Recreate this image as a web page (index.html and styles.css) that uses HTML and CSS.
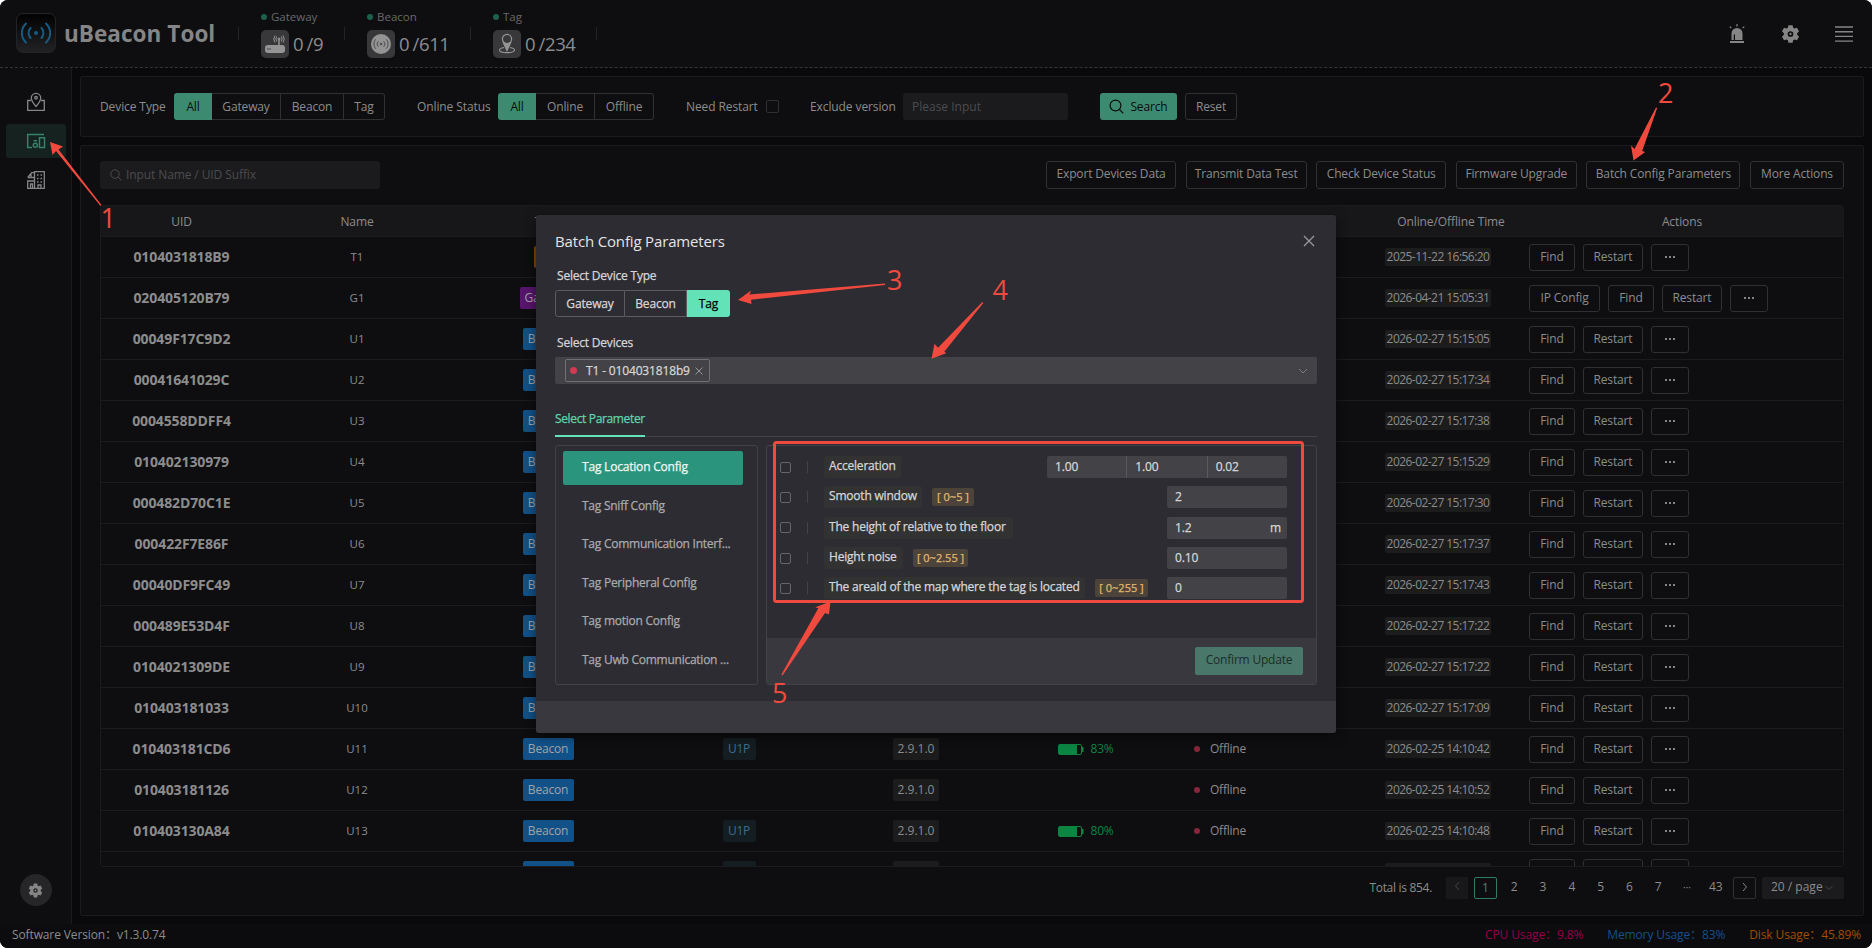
FILE: index.html
```html
<!DOCTYPE html>
<html lang="en">
<head>
<meta charset="utf-8">
<title>uBeacon Tool</title>
<link rel="stylesheet" href="styles.css">
</head>

<body>
<div class="app">

<header class="header">
  <div class="logo">
    <svg width="30" height="26" viewBox="0 0 30 26" fill="none" stroke="#155d86" stroke-width="1.9" stroke-linecap="round">
      <circle cx="15" cy="13" r="2" fill="#155d86" stroke="none"/>
      <path d="M9.500 8a7.500 7.500 0 0 0 0 10M20.500 8a7.500 7.500 0 0 1 0 10M5 3.500a13 13 0 0 0 0 19M25 3.500a13 13 0 0 1 0 19"/>
    </svg>
  </div>
  <h1 class="brand">uBeacon Tool</h1>

  <div class="stat stat-gateway">
    <div class="stat-label"><i class="dot"></i>Gateway</div>
    <div class="stat-value">
      <span class="stat-icon">
        <svg width="22" height="22" viewBox="0 0 22 22" fill="none" stroke="#949494" stroke-width="1">
          <rect x="1" y="12" width="20" height="8" rx="3" fill="#949494" stroke="none"/>
          <path d="M15 12V6" stroke-width="1.500"/>
          <circle cx="15" cy="6" r="1" fill="#949494"/>
          <path d="M12.800 3.500a4 4 0 0 0 0 5M17.200 3.500a4 4 0 0 1 0 5M11 2.500a6 6 0 0 0 0 7M19 2.500a6 6 0 0 1 0 7"/>
          <path d="M3.500 16h1M5.500 16h1" stroke="#38383a" stroke-width="1.500"/>
        </svg>
      </span>
      0 /9
    </div>
  </div>
  <div class="stat stat-beacon">
    <div class="stat-label"><i class="dot"></i>Beacon</div>
    <div class="stat-value">
      <span class="stat-icon">
        <svg width="22" height="22" viewBox="0 0 22 22" fill="none" stroke="#4c4c4c" stroke-width="1">
          <circle cx="11" cy="11" r="10" fill="#949494" stroke="none"/>
          <circle cx="11" cy="11" r="1.300" fill="#4c4c4c" stroke="none"/>
          <path d="M8.300 8.200a4 4 0 0 0 0 5.600M13.700 8.200a4 4 0 0 1 0 5.600M5.700 6.300a7 7 0 0 0 0 9.400M16.300 6.300a7 7 0 0 1 0 9.400"/>
        </svg>
      </span>
      0 /611
    </div>
  </div>
  <div class="stat stat-tag">
    <div class="stat-label"><i class="dot"></i>Tag</div>
    <div class="stat-value">
      <span class="stat-icon">
        <svg width="22" height="22" viewBox="0 0 22 22" fill="none" stroke="#949494" stroke-width="1.200">
          <circle cx="11" cy="6" r="4.600"/>
          <path d="M7 9l4 8.500L15 9c-1.500 2-6.500 2-8 0z" fill="#949494"/>
          <path d="M8 14.500c-2.800.5-4.500 1.300-4.500 2.500 0 1.600 3.300 2.700 7.500 2.700s7.500-1.100 7.500-2.700c0-1.200-1.700-2-4.500-2.500"/>
        </svg>
      </span>
      0 /234
    </div>
  </div>

  <div class="header-tools">
    <svg width="18" height="20" viewBox="0 0 18 20" fill="#858585">
      <path d="M3.500 16V9.500a5.500 5.500 0 0 1 11 0V16H7V10.500H5.800V16z"/>
      <rect x="2" y="17" width="14" height="2"/>
      <path d="M8.400 0h1.200v2.500H8.400zM1.300 3l.9-.8 1.600 1.600-.9.800zM16.700 3l-.9-.8-1.600 1.600.9.800z"/>
    </svg>
    <svg class="gear" width="19" height="20" viewBox="0 0 20 20"><use href="#gear"/></svg>
    <svg width="18" height="18" viewBox="0 0 18 18" stroke="#858585" stroke-width="1.400">
      <path d="M0 2h18M0 6.700h18M0 11.400h18M0 16.100h18"/>
    </svg>
  </div>
</header>

<div class="main">
  <nav class="sidebar">
    <a class="nav-item">
      <svg width="20" height="20" viewBox="0 0 20 20" fill="none" stroke="#858585" stroke-width="1.300">
        <path d="M5 8.500H1.700v9.800h16.600V8.500H15"/>
        <path d="M10 14.500C7 11 5.300 8.600 5.300 6a4.700 4.700 0 0 1 9.400 0c0 2.600-1.700 5-4.700 8.500z"/>
        <circle cx="10" cy="5.800" r="1.300"/>
      </svg>
    </a>
    <a class="nav-item active">
      <svg width="20" height="16" viewBox="0 0 20 16" fill="none" stroke="#34836a" stroke-width="1.500">
        <path d="M18 1.500H1.700v13H6"/>
        <rect x="13.500" y="4.700" width="5" height="9.800"/>
        <path d="M7.500 7.700h3.500"/>
        <circle cx="9.300" cy="12.300" r="2"/>
      </svg>
    </a>
    <a class="nav-item">
      <svg width="20" height="20" viewBox="0 0 20 20" fill="none" stroke="#858585" stroke-width="1.300">
        <path d="M8.500 18.300V1.700h9.800v16.600H1.700V11h6.800M4.500 18.300V14H6.500v4.300M1.700 7.500l4-4.800h2.800M1.700 7.500h6.800M5 7.500V4"/>
        <path d="M11 5h1.500M14.500 5H16M11 8.500h1.500M14.500 8.500H16M11 12h1.500M14.500 12H16M12 18v-3h3v3"/>
      </svg>
    </a>
    <span class="settings-fab">
      <svg class="gear" width="15" height="15" viewBox="0 0 20 20"><use href="#gear"/></svg>
    </span>
  </nav>

  <div class="content">
    <section class="card filters">
      <span class="label device-type">Device Type</span>
      <div class="radio-group">
        <span class="radio checked">All</span><span class="radio w-gateway">Gateway</span><span class="radio w-beacon">Beacon</span><span class="radio w-tag">Tag</span>
      </div>
      <span class="label online-status">Online Status</span>
      <div class="radio-group">
        <span class="radio checked">All</span><span class="radio w-online">Online</span><span class="radio w-offline">Offline</span>
      </div>
      <span class="label need-restart">Need Restart</span>
      <span class="checkbox"></span>
      <span class="label exclude">Exclude version</span>
      <span class="input exclude-input">Please Input</span>
      <span class="btn btn-search">
        <svg width="15" height="15" viewBox="0 0 15 15" fill="none" stroke="#0a0a0a" stroke-width="1.200"><circle cx="6.500" cy="6.500" r="5.400"/><path d="M10.300 10.300l4 4"/></svg>
        Search
      </span>
      <span class="btn btn-reset">Reset</span>
    </section>

    <section class="card list">
      <div class="toolbar">
        <span class="input search-input">
          <svg width="12" height="12" viewBox="0 0 12 12" fill="none" stroke="#4c4c4e"><circle cx="5" cy="5" r="4.200"/><path d="M8.200 8.200l3.300 3.300"/></svg>
          Input Name / UID Suffix
        </span>
        <div class="toolbar-actions">
          <span class="btn w-export">Export Devices Data</span>
          <span class="btn w-transmit">Transmit Data Test</span>
          <span class="btn w-check">Check Device Status</span>
          <span class="btn w-firmware">Firmware Upgrade</span>
          <span class="btn w-batch">Batch Config Parameters</span>
          <span class="btn w-more">More Actions</span>
        </div>
      </div>

      <div class="table">
        <div class="row thead">
          <span>UID</span><span>Name</span><span>Type</span><span></span><span></span><span></span><span></span><span></span><span class="time-head">Online/Offline Time</span><span>Actions</span>
        </div>
        <div id="rows"></div>
      </div>

      <div class="pagination">
        <span class="total">Total is 854.</span>
        <span class="page prev"><svg width="6" height="10" viewBox="0 0 6 10"><path d="M5 1L1.500 5 5 9"/></svg></span>
        <span class="page current">1</span>
        <span class="page">2</span>
        <span class="page">3</span>
        <span class="page">4</span>
        <span class="page">5</span>
        <span class="page">6</span>
        <span class="page">7</span>
        <span class="page more">···</span>
        <span class="page">43</span>
        <span class="page next"><svg width="6" height="10" viewBox="0 0 6 10"><path d="M1 1l3.500 4L1 9"/></svg></span>
        <span class="page-size">20 / page<svg width="8" height="6" viewBox="0 0 8 6"><path d="M.5 1L4 4.500 7.500 1"/></svg></span>
      </div>
    </section>
  </div>
</div>

<footer class="footer">
  <span class="version">Software Version：v1.3.0.74</span>
  <span class="cpu">CPU Usage：9.8%</span>
  <span class="memory">Memory Usage：83%</span>
  <span class="disk">Disk Usage：45.89%</span>
</footer>

<div class="modal">
  <div class="modal-head">
    <h2>Batch Config Parameters</h2>
    <svg width="12" height="12" viewBox="0 0 12 12" stroke="#99989c" stroke-width="1.300"><path d="M1 1l10 10M11 1L1 11"/></svg>
  </div>
  <div class="modal-body">
    <div class="form-label">Select Device Type</div>
    <div class="radio-group">
      <span class="radio w-m-gateway">Gateway</span><span class="radio w-m-beacon">Beacon</span><span class="radio checked">Tag</span>
    </div>
    <div class="form-label">Select Devices</div>
    <div class="select">
      <span class="chip"><i class="dot"></i>T1 - 0104031818b9<svg width="8" height="8" viewBox="0 0 8 8" stroke="#98989b"><path d="M.5.500l7 7M7.500.5l-7 7"/></svg></span>
      <svg width="10" height="6" viewBox="0 0 10 6" fill="none" stroke="#7d7d80"><path d="M1 1l4 4 4-4"/></svg>
    </div>
    <div class="tabs"><span class="tab">Select Parameter</span></div>

    <div class="panes">
      <ul class="menu">
        <li class="active">Tag Location Config</li>
        <li>Tag Sniff Config</li>
        <li>Tag Communication Interf...</li>
        <li>Tag Peripheral Config</li>
        <li>Tag motion Config</li>
        <li>Tag Uwb Communication ...</li>
      </ul>
      <div class="params">
        <div class="param"><i class="checkbox"></i><i class="bar"></i><span class="p-name p1">Acceleration</span>
          <span class="p-group"><span>1.00</span><span>1.00</span><span>0.02</span></span></div>
        <div class="param"><i class="checkbox"></i><i class="bar"></i><span class="p-name p2">Smooth window</span><span class="range r1">[ 0~5 ]</span>
          <span class="p-input">2</span></div>
        <div class="param"><i class="checkbox"></i><i class="bar"></i><span class="p-name p3">The height of relative to the floor</span>
          <span class="p-input">1.2<em>m</em></span></div>
        <div class="param"><i class="checkbox"></i><i class="bar"></i><span class="p-name p4">Height noise</span><span class="range r2">[ 0~2.55 ]</span>
          <span class="p-input">0.10</span></div>
        <div class="param"><i class="checkbox"></i><i class="bar"></i><span class="p-name p5">The areaId of the map where the tag is located</span><span class="range r3">[ 0~255 ]</span>
          <span class="p-input">0</span></div>
        <div class="params-foot"><span class="btn-confirm">Confirm Update</span></div>
      </div>
    </div>
  </div>
  <div class="modal-foot"></div>
</div>

<!-- step markers drawn over the page -->
<svg class="steps" width="1872" height="948" viewBox="0 0 1872 948">
  <rect x="774.500" y="442.500" width="528" height="159" rx="2"/>
  <path d="M50 142l13 4.500-4.500 3L101.500 205l-1 1L56 151l-3.500 4z"/>
  <path d="M1633.500 160.500l-2.500-15 3.500 3.500 21.500-41.500 1.200.5-15 43 3 1z"/>
  <path d="M738 300l13-9.500-1.500 4L885 283.500v1.500l-134 14.800.5 4.200z"/>
  <path d="M931.500 358.700l3-15 3.500 4L982.300 302l1 1-39 48.700 2 1.600z"/>
  <path d="M830.500 601.500l-1.500 13-4-1.500-42.500 62.500-1.200-.8 37-66.500-3-1z"/>
  <text x="100.500" y="228">1</text>
  <text x="1658" y="103">2</text>
  <text x="887" y="289.500">3</text>
  <text x="992.500" y="300">4</text>
  <text x="772" y="703">5</text>
</svg>

</div>

<svg width="0" height="0" class="defs">
  <symbol id="gear" viewBox="0 0 20 20">
    <path fill-rule="evenodd" d="M7.800.8h4.400l.6 2.600 1.400.8 2.600-.8 2.200 3.800-2 1.900v1.800l2 1.900-2.200 3.800-2.600-.8-1.400.8-.6 2.600H7.800l-.6-2.600-1.400-.8-2.600.8L1 12.800l2-1.900V9.100L1 7.200l2.200-3.800 2.600.8 1.400-.8zM10 7a3 3 0 1 0 0 6 3 3 0 0 0 0-6zm0 1.800a1.200 1.200 0 1 1 0 2.400 1.200 1.200 0 0 1 0-2.400z"/>
  </symbol>
</svg>

<script src="app.js"></script>
</body>
</html>
```

FILE: styles.css
```css
* {
  box-sizing: border-box;
}

body {
  background: #fff;
  color: #8c8c8d;
  font: 12px/20px 'Open Sans', 'Noto Sans', 'Noto Sans CJK SC', sans-serif;
  margin: 0;
  overflow: hidden;
}

h1,
h2,
ul {
  margin: 0;
  padding: 0;
}
ul {
  list-style-type: none;
}
svg {
  flex: none;
}
i,
em {
  font-style: normal;
}

.app {
  background: #09090b;
  border-radius: 8px;
  display: flex;
  flex-direction: column;
  height: 948px;
  overflow: hidden;
  position: relative;
  width: 1872px;
}
.defs {
  position: absolute;
}
.gear {
  fill: #858585;
}
.dot {
  border-radius: 50%;
  display: inline-block;
  height: 6px;
  width: 6px;
}


/* Header */
.header {
  align-items: flex-start;
  background: #0e0e10;
  border-bottom: 1px dashed #343436;
  display: flex;
  height: 68px;
  padding-left: 16px;
}
.logo {
  align-items: center;
  background: linear-gradient(#020203, #222224);
  border: 1px solid #242426;
  border-radius: 7px;
  display: flex;
  height: 40px;
  justify-content: center;
  margin-top: 13px;
  width: 40px;
}
.brand {
  color: #858586;
  font-size: 22.500px;
  font-weight: 700;
  letter-spacing: .05px;
  line-height: 40px;
  margin: 14px 0 0 8px;
  white-space: nowrap;
  width: 174px;
}
.stat {
  background: linear-gradient(#232325, #232325) 0 27px / 1px 13px no-repeat;
  height: 66px;
  padding: 8px 0 0 23px;
  white-space: nowrap;
  width: 106px;
}
.stat-beacon {
  width: 126px;
}
.stat-tag {
  background:
    linear-gradient(#232325, #232325) 0 27px / 1px 13px no-repeat,
    linear-gradient(#232325, #232325) 100% 27px / 1px 13px no-repeat;
  width: 127px;
}
.stat-label {
  color: #69696b;
  font-size: 11.500px;
  line-height: 18px;
}
.stat-label .dot {
  background: #1b614c;
  height: 6px;
  margin-right: 4px;
  position: relative;
  top: -1px;
}
.stat-value {
  align-items: center;
  display: flex;
  font-size: 18.500px;
  letter-spacing: -.4px;
  gap: 4px;
  height: 28px;
  line-height: 24px;
  margin-top: 4px;
  word-spacing: -1px;
}
.stat-icon {
  align-items: center;
  background: #38383a;
  border-radius: 5px;
  display: flex;
  height: 28px;
  justify-content: center;
  width: 28px;
}
.header-tools {
  align-items: center;
  display: flex;
  gap: 35px;
  height: 67px;
  margin-left: auto;
  padding-right: 19px;
}


/* Sidebar */
.main {
  display: flex;
  height: 856px;
}
.sidebar {
  align-items: center;
  background: #0e0e10;
  border-right: 1px solid #1b1b1d;
  display: flex;
  flex-direction: column;
  gap: 5px;
  padding-top: 17px;
  width: 72px;
}
.nav-item {
  align-items: center;
  border-radius: 3px;
  display: flex;
  height: 34px;
  justify-content: center;
  width: 60px;
}
.nav-item.active {
  background: #15221f;
}
.settings-fab {
  align-items: center;
  background: #262628;
  border-radius: 50%;
  display: flex;
  height: 32px;
  justify-content: center;
  margin: auto 0 18px;
  width: 32px;
}


/* Cards */
.content {
  display: flex;
  flex-direction: column;
  gap: 8px;
  padding: 8px;
}
.card {
  background: #0e0e10;
  border: 1px solid #1b1b1d;
  border-radius: 2px;
  width: 1784px;
}
.filters {
  align-items: center;
  display: flex;
  height: 61px;
  padding-left: 19px;
}
.list {
  display: flex;
  flex-direction: column;
  height: 771px;
  padding: 15px 19px 0;
}
.label {
  flex: none;
  letter-spacing: -.1px;
  white-space: nowrap;
}
.device-type {
  width: 74px;
}
.online-status {
  margin-left: 32px;
  width: 81px;
}
.need-restart {
  margin-left: 32px;
  width: 80px;
}
.exclude {
  margin-left: 31px;
  width: 93px;
}

.radio-group {
  border-radius: 3px;
  display: flex;
  height: 27px;
}
.radio {
  border: 1px solid #303032;
  border-left-width: 0;
  letter-spacing: -.15px;
  line-height: 26px;
  text-align: center;
  width: 38px;
}
.radio:last-child {
  border-radius: 0 3px 3px 0;
}
.filters .checked {
  background: #3c8b70;
  border: 0;
  border-radius: 3px 0 0 3px;
  color: #08100d;
  line-height: 28px;
}
.w-gateway {
  width: 69px;
}
.w-beacon {
  width: 63px;
}
.w-tag {
  width: 41px;
}
.w-online {
  width: 59px;
}
.w-offline {
  width: 59px;
}

.checkbox {
  border: 1px solid #303032;
  border-radius: 2px;
  flex: none;
  height: 13px;
  width: 13px;
}
.input {
  align-items: center;
  background: #1b1b1d;
  border-radius: 3px;
  color: #4c4c4e;
  display: flex;
}
.exclude-input {
  height: 27px;
  padding-left: 9px;
  width: 165px;
}
.btn {
  align-items: center;
  border: 1px solid #303032;
  border-radius: 3px;
  display: flex;
  flex: none;
  height: 28px;
  justify-content: center;
  letter-spacing: -.15px;
  line-height: 24px;
  padding-bottom: 2px;
  white-space: nowrap;
}
.btn-search {
  background: #3c8b70;
  border: 0;
  color: #0a0a0a;
  gap: 6px;
  height: 27px;
  margin-left: 32px;
  padding-bottom: 0;
  width: 77px;
}
.btn-reset {
  height: 27px;
  margin-left: 8px;
  padding-bottom: 0;
  width: 52px;
}

.toolbar {
  display: flex;
  height: 44px;
  justify-content: space-between;
}
.search-input {
  gap: 4px;
  height: 28px;
  letter-spacing: -.1px;
  padding-left: 10px;
  width: 280px;
}
.toolbar-actions {
  display: flex;
  gap: 9.600px;
}
.w-export {
  width: 130px;
}
.w-transmit {
  width: 121px;
}
.w-check {
  width: 130px;
}
.w-firmware {
  width: 121px;
}
.w-batch {
  width: 154px;
}
.w-more {
  width: 94px;
}


/* Device table */
.table {
  border: 1px solid #1b1b1d;
  border-radius: 3px;
  height: 662px;
  overflow: hidden;
}
.row {
  align-items: center;
  border-bottom: 1px solid #1b1b1d;
  display: grid;
  grid-template-columns: 161px 190px 192px 190px 164px 176px 94px 87px 166px 322px;
  height: 41px;
  justify-items: center;
}
.thead {
  background: #171719;
  height: 31px;
  letter-spacing: -.1px;
  line-height: 19px;
}
.time-head {
  margin-left: 26px;
}
.row .uid {
  font-size: 14px;
  font-weight: 700;
  letter-spacing: -.12px;
}
.row .name {
  font-size: 11.500px;
  margin-top: -1px;
}
.tag {
  align-items: center;
  border-radius: 2px;
  color: #a0a4a8;
  display: flex;
  height: 22px;
  justify-content: center;
  letter-spacing: -.2px;
  line-height: 20px;
  padding-bottom: 1px;
  width: 51px;
}
.tag.beacon {
  background: #115188;
}
.tag.gateway {
  background: #57156b;
  width: 57px;
}
.tag.tag-type {
  background: #894500;
  width: 28px;
}
.tag.model {
  background: #141d22;
  color: #3b6e91;
  width: 33px;
}
.tag.ver {
  background: #1c1c1d;
  color: #8c8c8d;
  letter-spacing: 0;
  width: 46px;
}
.battery {
  align-items: center;
  color: #0c8543;
  display: flex;
  gap: 6px;
  letter-spacing: -.2px;
}
.status {
  align-items: center;
  display: flex;
  gap: 10px;
  letter-spacing: -.2px;
  margin-left: -2px;
}
.status .dot {
  background: #872639;
}
.time {
  background: #1c1c1d;
  border-radius: 2px;
  height: 18px;
  letter-spacing: -.55px;
  line-height: 17px;
  text-align: center;
  width: 106px;
}
.actions {
  display: flex;
  gap: 8px;
  justify-self: start;
  padding-left: 8px;
}
.actions .btn {
  height: 27px;
  padding: 0 0 1px;
}
.w-find {
  width: 46px;
}
.w-restart {
  width: 60px;
}
.w-dots {
  width: 38px;
}
.w-ip {
  width: 71px;
}


/* Pagination */
.pagination {
  align-items: center;
  display: flex;
  height: 22px;
  justify-content: flex-end;
  margin-top: 10px;
}
.page {
  height: 22px;
  line-height: 20px;
  margin-right: 6px;
  text-align: center;
  width: 22.800px;
}
.total {
  letter-spacing: -.3px;
  margin-right: 14px;
}
.pagination svg {
  fill: none;
  stroke: #858586;
}
.pagination .prev {
  background: #18181a;
  width: 22px;
}
.pagination .prev svg,
.page-size svg {
  stroke: #444446;
}
.current {
  border: 1px solid #2f7c64;
  border-radius: 2px;
  color: #3c8b70;
}
.more {
  font-size: 10px;
}
.next {
  border: 1px solid #303032;
  border-radius: 2px;
}
.page-size {
  background: #1b1b1d;
  border-radius: 2px;
  height: 22px;
  line-height: 20px;
  padding-left: 9px;
  width: 82px;
}
.page-size svg {
  margin-left: 2px;
}


/* Footer */
.footer {
  background: #0c0c0e;
  display: flex;
  height: 24px;
  letter-spacing: -.12px;
  padding: 1px 11px 0 12px;
}
.footer span {
  white-space: nowrap;
}
.version {
  margin-right: auto;
}
.cpu {
  color: #96004b;
}
.memory {
  color: #14508f;
  margin: 0 24px;
}
.disk {
  color: #a04e00;
}


/* Batch config dialog */
.modal {
  -webkit-text-stroke: .25px;
  background: #2d2c32;
  border-radius: 3px;
  box-shadow: 0 3px 12px rgba(0, 0, 0, .5);
  color: #d6d6d8;
  display: flex;
  flex-direction: column;
  height: 518px;
  left: 536px;
  letter-spacing: -.15px;
  position: absolute;
  top: 215px;
  width: 800px;
}
.modal-head {
  align-items: center;
  display: flex;
  height: 51px;
  justify-content: space-between;
  padding: 0 21px 0 19px;
}
.modal-head h2 {
  -webkit-text-stroke: 0;
  color: #e4e4e5;
  font-size: 15px;
  font-weight: 400;
  letter-spacing: -.16px;
}
.modal-body {
  flex: 1;
  padding: 0 19px;
}
.form-label {
  height: 24px;
  letter-spacing: -.2px;
  line-height: 20px;
  padding-left: 2px;
}
.modal .radio-group {
  height: 27px;
  margin-bottom: 16px;
}
.modal .radio {
  border-color: #5b5b60;
}
.modal .radio:first-child {
  border-left-width: 1px;
  border-radius: 3px 0 0 3px;
}
.w-m-gateway {
  width: 70px;
}
.w-m-beacon {
  width: 62px;
}
.modal .checked {
  background: #63e2b7;
  border: 0;
  color: #000;
  line-height: 28px;
  width: 43px;
}
.select {
  align-items: center;
  background: #434246;
  border-radius: 2px;
  display: flex;
  height: 27px;
  justify-content: space-between;
  padding: 0 9px 0 10px;
}
.chip {
  align-items: center;
  border: 1px solid #707074;
  border-radius: 2px;
  display: flex;
  height: 23px;
  letter-spacing: -.15px;
  padding-left: 4px;
  white-space: nowrap;
  width: 145px;
}
.chip .dot {
  background: #d03a52;
  height: 7px;
  margin-right: 9px;
  width: 7px;
}
.chip svg {
  margin-left: 5px;
}
.tabs {
  background: linear-gradient(#434248, #434248) 0 29px / 100% 1px no-repeat;
  height: 31px;
  margin-top: 23px;
}
.tab {
  border-bottom: 2px solid #63e2b7;
  color: #5fd5ad;
  display: inline-block;
  height: 30px;
  letter-spacing: -.35px;
  line-height: 24px;
  white-space: nowrap;
  width: 90px;
}
.panes {
  display: flex;
  gap: 8px;
  margin-top: 7px;
}
.menu,
.params {
  border: 1px solid #434248;
  border-radius: 3px;
  height: 240px;
}
.menu {
  padding: 5px 0 0 7px;
  width: 203px;
}
.menu li {
  border-radius: 2px;
  color: #aaaaad;
  height: 34px;
  letter-spacing: -.25px;
  line-height: 32px;
  margin-bottom: 4.500px;
  padding-left: 19px;
  white-space: nowrap;
  width: 180px;
}
.menu .active {
  background: #2a947d;
  color: #f0f6f4;
  letter-spacing: -.2px;
}
.params {
  display: flex;
  flex-direction: column;
  padding-top: 10px;
  width: 551px;
}
.param {
  align-items: center;
  display: flex;
  height: 22.400px;
  margin-bottom: 7.900px;
  padding: 0 29px 0 13px;
}
.param .checkbox {
  border-color: #66656a;
  height: 11px;
  width: 11px;
}
.bar {
  background: #434248;
  height: 12px;
  margin: 0 16px;
  width: 1px;
}
.p-name {
  background: #323232;
  border-radius: 2px;
  flex: none;
  height: 22px;
  letter-spacing: -.2px;
  line-height: 20.500px;
  padding-left: 5px;
  white-space: nowrap;
}
.p1 {
  width: 77px;
}
.p2 {
  width: 98px;
}
.p3 {
  width: 189px;
}
.p4 {
  width: 79px;
}
.p5 {
  width: 261px;
}
.range {
  background: #4c433b;
  border-radius: 2px;
  color: #e3b76c;
  flex: none;
  font-size: 11px;
  height: 18px;
  letter-spacing: 0;
  line-height: 17px;
  margin-left: 10px;
  text-align: center;
}
.r1 {
  width: 42px;
}
.r2 {
  width: 55px;
}
.r3 {
  width: 53px;
}
.p-input,
.p-group {
  background: #434246;
  border-radius: 2px;
  display: flex;
  height: 22px;
  justify-content: space-between;
  line-height: 22px;
  margin-left: auto;
  padding: 0 6px 0 8px;
  width: 120px;
}
.p-group {
  padding: 0;
  width: 240px;
}
.p-group span {
  flex: 1;
  padding-left: 8px;
}
.p-group span + span {
  border-left: 1px solid #5a5a5e;
}
.params-foot {
  background: #39383e;
  display: flex;
  height: 46px;
  justify-content: flex-end;
  margin-top: auto;
  padding: 9px 13px;
}
.btn-confirm {
  -webkit-text-stroke: 0;
  background: #49786a;
  border-radius: 2px;
  color: #1b2d28;
  height: 28px;
  letter-spacing: -.2px;
  line-height: 26px;
  text-align: center;
  width: 108px;
}
.modal-foot {
  background: #39383e;
  border-radius: 0 0 3px 3px;
  height: 32px;
}


/* Step markers */
.steps {
  fill: #f04a3e;
  font-size: 27px;
  left: 0;
  position: absolute;
  top: 0;
}
.steps rect {
  fill: none;
  stroke: #f04a3e;
  stroke-width: 3;
}
```

FILE: app.js
```js
var devices = [
  ['0104031818B9', 'T1', 'Tag', '', '', '', '2025-11-22 16:56:20'],
  ['020405120B79', 'G1', 'Gateway', '', '', '', '2026-04-21 15:05:31'],
  ['00049F17C9D2', 'U1', 'Beacon', '', '', '', '2026-02-27 15:15:05'],
  ['00041641029C', 'U2', 'Beacon', '', '', '', '2026-02-27 15:17:34'],
  ['0004558DDFF4', 'U3', 'Beacon', '', '', '', '2026-02-27 15:17:38'],
  ['010402130979', 'U4', 'Beacon', '', '', '', '2026-02-27 15:15:29'],
  ['000482D70C1E', 'U5', 'Beacon', '', '', '', '2026-02-27 15:17:30'],
  ['000422F7E86F', 'U6', 'Beacon', '', '', '', '2026-02-27 15:17:37'],
  ['00040DF9FC49', 'U7', 'Beacon', '', '', '', '2026-02-27 15:17:43'],
  ['000489E53D4F', 'U8', 'Beacon', '', '', '', '2026-02-27 15:17:22'],
  ['0104021309DE', 'U9', 'Beacon', '', '', '', '2026-02-27 15:17:22'],
  ['010403181033', 'U10', 'Beacon', '', '', '', '2026-02-27 15:17:09'],
  ['010403181CD6', 'U11', 'Beacon', 'U1P', '2.9.1.0', '83%', '2026-02-25 14:10:42'],
  ['010403181126', 'U12', 'Beacon', '', '2.9.1.0', '', '2026-02-25 14:10:52'],
  ['010403130A84', 'U13', 'Beacon', 'U1P', '2.9.1.0', '80%', '2026-02-25 14:10:48']
];

var tagClass = { Tag: 'tag-type', Gateway: 'gateway', Beacon: 'beacon' };

function batteryCell(level) {
  if (!level) return '';
  return '<span class="battery"><svg width="26" height="11" viewBox="0 0 26 11">' +
      '<rect x=".5" y=".5" width="23" height="10" rx="1.5" fill="none" stroke="#0c8543"/>' +
      '<rect x="1" y="1" width="18" height="9" fill="#0c8543"/>' +
      '<rect x="24" y="3" width="1.5" height="5" fill="#0c8543"/></svg>' + level + '</span>';
}

function actionsCell(type) {
  return '<span class="actions">' +
      (type === 'Gateway' ? '<span class="btn w-ip">IP Config</span>' : '') +
      '<span class="btn w-find">' + (type ? 'Find' : '') + '</span>' +
      '<span class="btn w-restart">' + (type ? 'Restart' : '') + '</span>' +
      '<span class="btn w-dots"><svg width="12" height="2" viewBox="0 0 12 2" fill="#858586">' +
      '<path d="M1 0h2v2H1zM5 0h2v2H5zM9 0h2v2H9z"/></svg></span></span>';
}

var html = devices.map(function(d) {
  return '<div class="row">' +
      '<span class="uid">' + d[0] + '</span>' +
      '<span class="name">' + d[1] + '</span>' +
      '<span class="tag ' + tagClass[d[2]] + '">' + d[2] + '</span>' +
      '<span>' + (d[3] ? '<span class="tag model">' + d[3] + '</span>' : '') + '</span>' +
      '<span>' + (d[4] ? '<span class="tag ver">' + d[4] + '</span>' : '') + '</span>' +
      '<span>' + batteryCell(d[5]) + '</span>' +
      '<span>' + (d[4] ? '<span class="status"><i class="dot"></i>Offline</span>' : '') + '</span>' +
      '<span></span>' +
      '<span class="time">' + d[6] + '</span>' +
      actionsCell(d[2]) + '</div>';
}).join('');

// last row, only its top edge is inside the scroll area
html += '<div class="row"><span></span><span></span><span class="tag beacon"></span>' +
    '<span class="tag model"></span><span class="tag ver"></span>' +
    '<span></span><span></span><span></span><span class="time"></span>' +
    actionsCell('') + '</div>';

document.getElementById('rows').innerHTML = html;
```
